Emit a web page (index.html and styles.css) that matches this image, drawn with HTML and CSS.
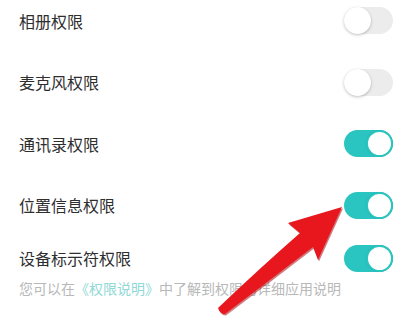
FILE: index.html
```html
<!DOCTYPE html>
<html lang="zh">
<head>
<meta charset="utf-8">
<link rel="stylesheet" href="styles.css">
</head>
<body>
<div class="page">
  <div class="list">
    <div class="row first"><span class="label">相册权限</span><span class="switch off"><span class="knob"></span></span></div>
    <div class="row"><span class="label">麦克风权限</span><span class="switch off"><span class="knob"></span></span></div>
    <div class="row"><span class="label">通讯录权限</span><span class="switch on"><span class="knob"></span></span></div>
    <div class="row"><span class="label">位置信息权限</span><span class="switch on"><span class="knob"></span></span></div>
    <div class="row last"><span class="label">设备标示符权限</span><span class="switch on"><span class="knob"></span></span></div>
  </div>
  <p class="note">您可以在<span class="link">《权限说明》</span>中了解到权限的详细应用说明</p>
  <svg class="arrow" width="400" height="317" viewBox="0 0 400 317">
    <path d="M342 207 L288 223 L300 233 Q260 268 218 308 Q220 314 225 314 Q270 280 313 247 L318 260 Z" fill="#a80f18" transform="translate(1,1.5)" opacity="0.55"/>
    <path d="M342 207 L288 223 L300 233 Q260 268 218 308 Q220 314 225 314 Q270 280 313 247 L318 260 Z" fill="#e8161d"/>
  </svg>
</div>
</body>
</html>
```
FILE: styles.css
```css
html, body {
  margin: 0;
  padding: 0;
  background: #fff;
}
.page {
  position: relative;
  width: 400px;
  height: 317px;
  overflow: hidden;
  font-family: "Noto Sans CJK SC", "Noto Sans", sans-serif;
}
.list {
  display: flex;
  flex-direction: column;
  padding: 0 7px 0 19px;
}
.row {
  height: 61.5px;
  display: flex;
  align-items: center;
  justify-content: space-between;
}
.row.first {
  margin-top: -10px;
}
.row.last {
  height: 44px;
}
.label {
  font-size: 16px;
  color: #2e2e2e;
  line-height: 20px;
}
.switch {
  position: relative;
  width: 49px;
  height: 27px;
  border-radius: 14px;
  box-sizing: border-box;
}
.switch.off {
  background: #ececec;
}
.switch.on {
  background: #2bc5c1;
}
.knob {
  position: absolute;
  top: 0;
  width: 27px;
  height: 27px;
  border-radius: 50%;
  background: #fff;
  box-sizing: border-box;
}
.switch.off .knob {
  left: 0;
  box-shadow: 0 1px 3px rgba(0,0,0,0.25);
}
.switch.on .knob {
  right: 0;
  border: 2px solid #2bc5c1;
  box-shadow: 0 0 1px rgba(0,0,0,0.2);
}
.note {
  margin: 0;
  padding-left: 19px;
  font-size: 14px;
  line-height: 16px;
  color: #b8b8b8;
  white-space: nowrap;
}
.link {
  color: #8fd9d6;
}
.arrow {
  position: absolute;
  left: 0;
  top: 0;
}
```
